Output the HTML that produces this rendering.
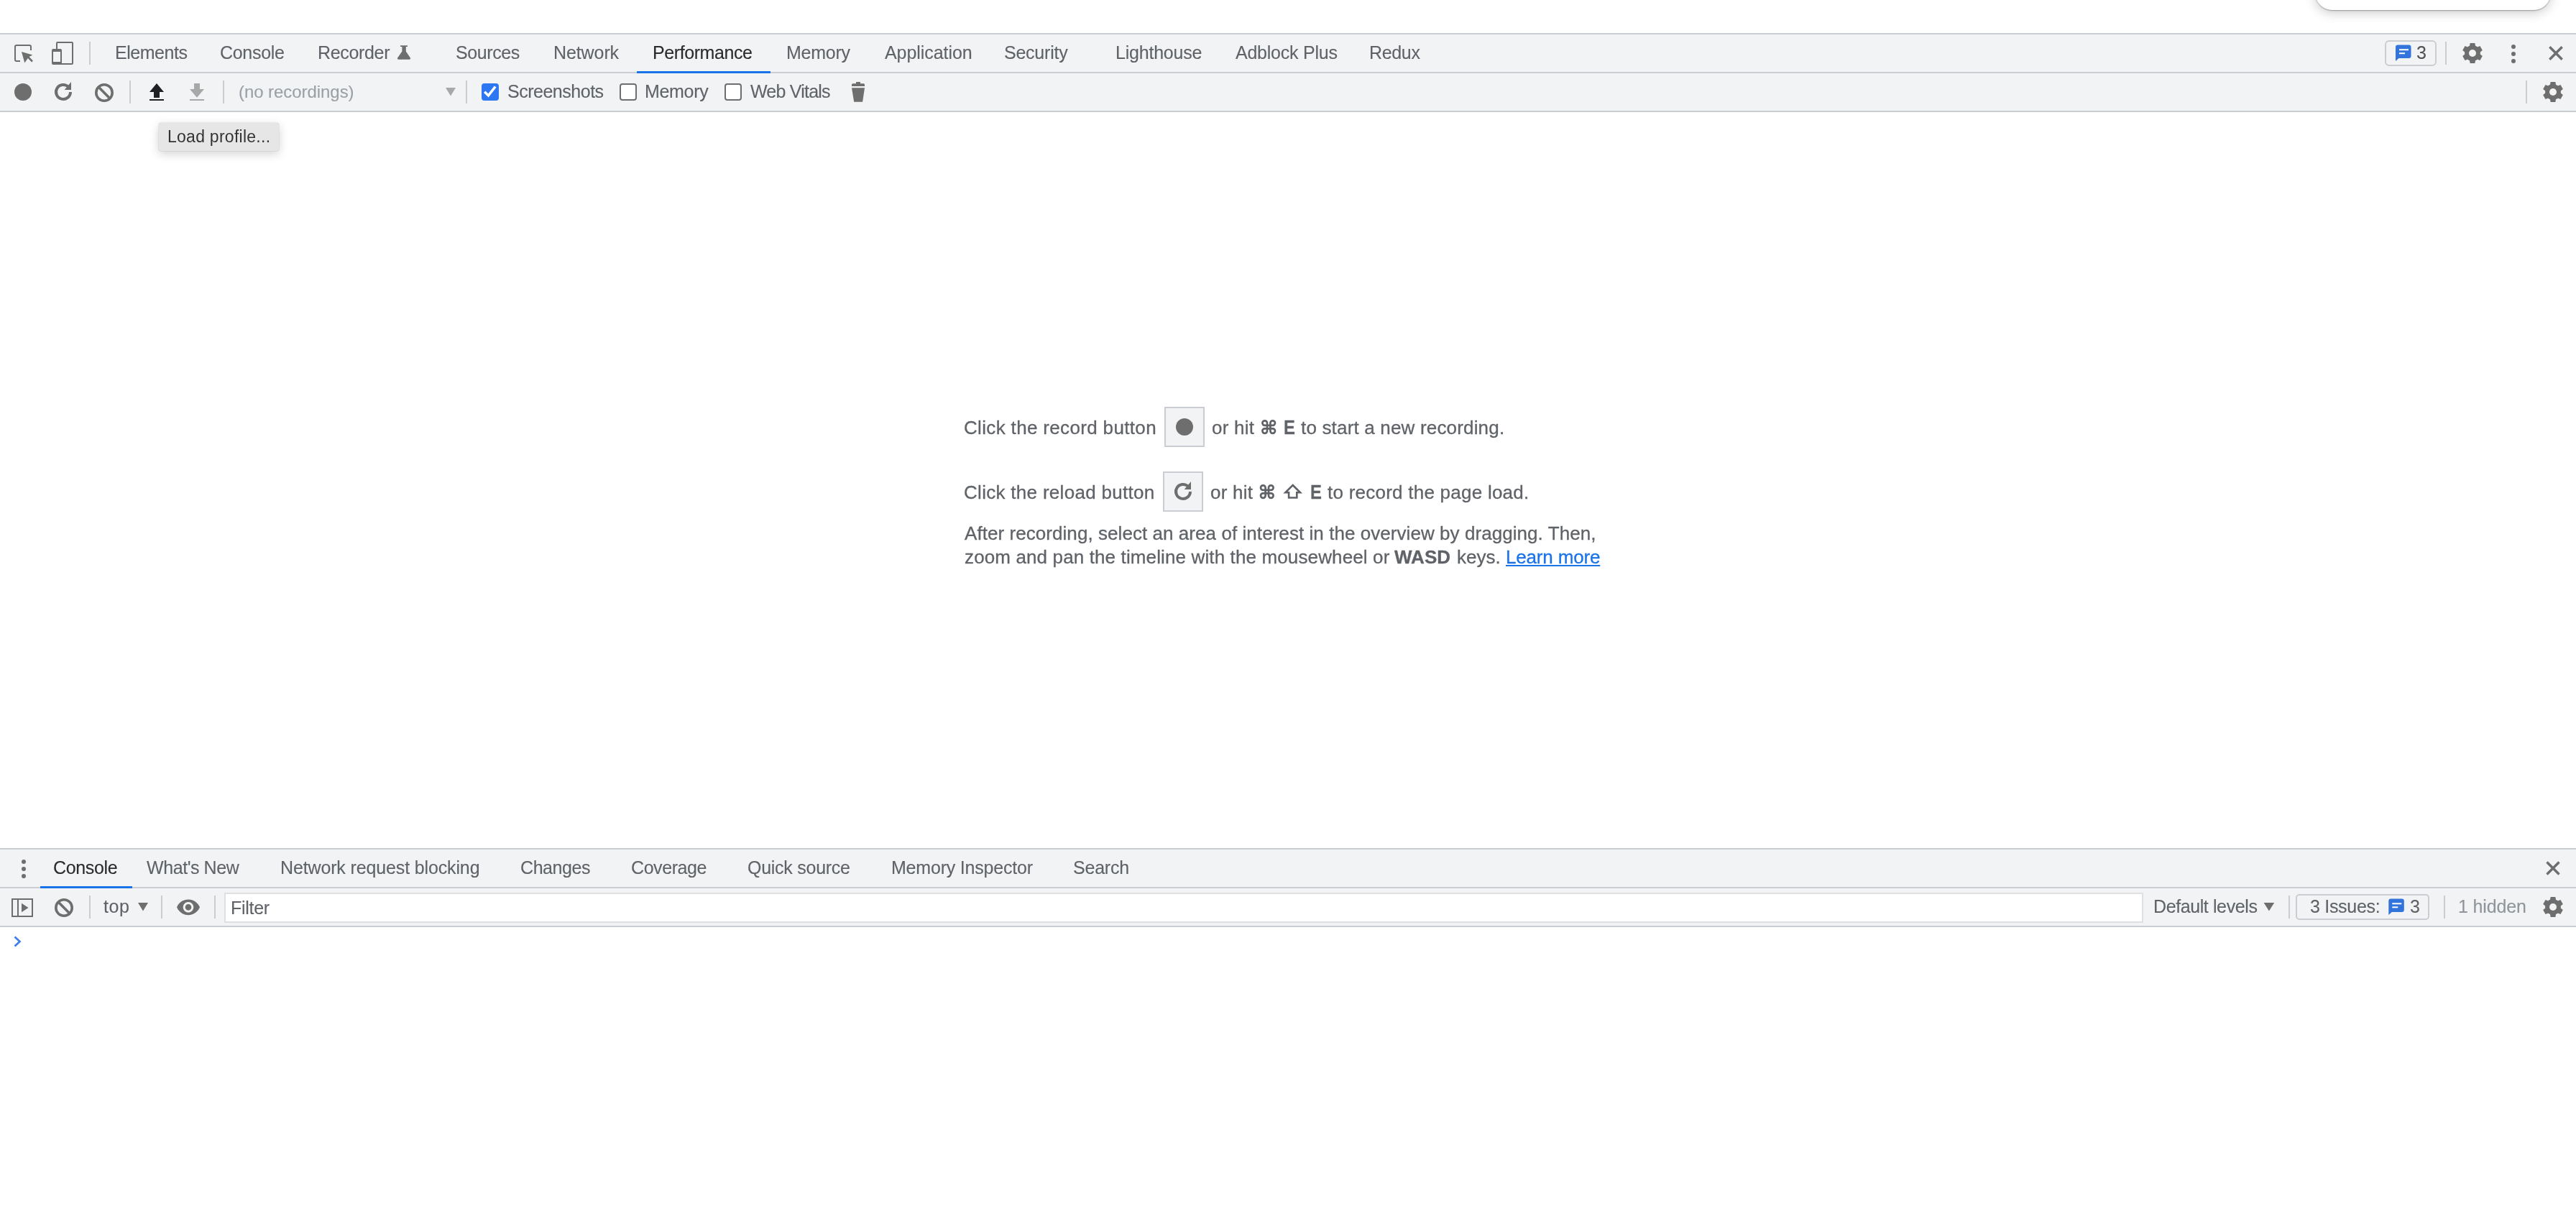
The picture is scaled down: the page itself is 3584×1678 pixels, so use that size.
<!DOCTYPE html>
<html><head><meta charset="utf-8"><style>
html,body{margin:0;padding:0;}
body{width:3584px;height:1678px;overflow:hidden;position:relative;background:#fff;font-family:"Liberation Sans",sans-serif;}
.t{position:absolute;white-space:pre;will-change:transform;-webkit-text-stroke:0.12px currentColor;}
.r{position:absolute;}
.s{position:absolute;overflow:visible;}
</style></head><body>
<div class="r" style="left:3221px;top:-40px;width:328px;height:54px;background:#fff;border-radius:0 0 24px 24px;box-shadow:0 4px 16px rgba(0,0,0,0.2),0 0.5px 1.5px rgba(0,0,0,0.3);"></div>
<div class="r" style="left:0px;top:46px;width:3584px;height:2px;background:#cacdd1;"></div>
<div class="r" style="left:0px;top:48px;width:3584px;height:52px;background:#f1f3f4;"></div>
<div class="r" style="left:0px;top:100px;width:3584px;height:2px;background:#cacdd1;"></div>
<div class="r" style="left:0px;top:102px;width:3584px;height:52px;background:#f1f3f4;"></div>
<div class="r" style="left:0px;top:154px;width:3584px;height:2px;background:#cacdd1;"></div>
<svg class="s" style="left:14px;top:54px;" width="40" height="40" viewBox="14 54 40 40"><path d="M28 85 H23 A2 2 0 0 1 21 83 V65 A2 2 0 0 1 23 63 H41 A2 2 0 0 1 43 65 V70" fill="none" stroke="#6e6e6e" stroke-width="2" stroke-linejoin="round"/><path d="M30 72 L45.4 76.4 L40.6 79.1 L45.9 84.6 L44.1 86.4 L38.8 81 L34.3 87.5 Z" fill="#6e6e6e"/></svg>
<svg class="s" style="left:66px;top:54px;" width="40" height="40" viewBox="66 54 40 40"><path d="M79 69 V60 A1 1 0 0 1 80 59 H100 A1 1 0 0 1 101 60 V88 A1 1 0 0 1 100 89 H85" fill="none" stroke="#6e6e6e" stroke-width="2"/><path d="M74 68 H84 A2 2 0 0 1 86 70 V90 H74 A2 2 0 0 1 72 88 V70 A2 2 0 0 1 74 68 Z M74 72 V86 H84 V72 Z" fill="#6e6e6e" fill-rule="evenodd"/></svg>
<div class="r" style="left:124px;top:58px;width:2px;height:32px;background:#cacdd1;"></div>
<svg class="s" style="left:14px;top:108px;" width="40" height="40" viewBox="14 108 40 40"><circle cx="32" cy="128" r="12" fill="#6e6e6e"/></svg>
<svg class="s" style="left:70px;top:106px;" width="40" height="40" viewBox="70 106 40 40"><path d="M98 128 A10 10 0 1 1 95.07 120.93" fill="none" stroke="#6e6e6e" stroke-width="4"/><path d="M89.7 125 L99 125 L99 114 Z" fill="#6e6e6e"/></svg>
<svg class="s" style="left:126px;top:110px;" width="40" height="40" viewBox="126 110 40 40"><circle cx="145" cy="129" r="11.2" fill="none" stroke="#6e6e6e" stroke-width="3.6"/><path d="M137.08 121.08 L152.92 136.92" stroke="#6e6e6e" stroke-width="3.6"/></svg>
<div class="r" style="left:180px;top:112px;width:2px;height:32px;background:#cacdd1;"></div>
<svg class="s" style="left:200px;top:110px;" width="40" height="40" viewBox="200 110 40 40"><path d="M218 116 L228 128 H222 V136 H214 V128 H208 Z M208 138 H228 V140 H208 Z" fill="#202124"/></svg>
<svg class="s" style="left:256px;top:110px;" width="40" height="40" viewBox="256 110 40 40"><path d="M270 116 H278 V124 H284 L274 135.8 L264 124 H270 Z M264 138 H284 V140 H264 Z" fill="#a8a8a8"/></svg>
<div class="r" style="left:310px;top:112px;width:2px;height:32px;background:#cacdd1;"></div>
<div class="t" id="t0" style="left:331.59px;top:116px;font-size:24px;line-height:24px;color:#9aa0a6;letter-spacing:-0.058px;">(no recordings)</div>
<svg class="s" style="left:614px;top:116px;" width="26" height="26" viewBox="614 116 26 26"><path d="M620 122 H634 L627 133.5 Z" fill="#a8a8a8"/></svg>
<div class="r" style="left:648px;top:112px;width:2px;height:32px;background:#cacdd1;"></div>
<div class="r" style="left:670px;top:116px;width:24px;height:24px;background:#2e77f3;border-radius:4px;"></div>
<svg class="s" style="left:670px;top:116px;" width="24" height="24" viewBox="670 116 24 24"><path d="M674.2 127.8 L679.5 132.9 L689.2 120.5" fill="none" stroke="#fff" stroke-width="3.5"/></svg>
<div class="t" id="t1" style="left:705.54px;top:115px;font-size:25px;line-height:25px;color:#5f6368;letter-spacing:-0.487px;">Screenshots</div>
<div class="r" style="left:862px;top:116px;width:24px;height:24px;background:#fff;box-sizing:border-box;border:2px solid #6e6e6e;border-radius:4px;"></div>
<div class="t" id="t2" style="left:896.96px;top:115px;font-size:25px;line-height:25px;color:#5f6368;letter-spacing:-0.327px;">Memory</div>
<div class="r" style="left:1008px;top:116px;width:24px;height:24px;background:#fff;box-sizing:border-box;border:2px solid #6e6e6e;border-radius:4px;"></div>
<div class="t" id="t3" style="left:1044.31px;top:115px;font-size:25px;line-height:25px;color:#5f6368;letter-spacing:-0.776px;">Web Vitals</div>
<svg class="s" style="left:1180px;top:110px;" width="30" height="36" viewBox="1180 110 30 36"><path d="M1191 114 H1197 V116.2 H1201.5 A1.5 1.5 0 0 1 1203 117.7 V120 H1185 V117.7 A1.5 1.5 0 0 1 1186.5 116.2 H1191 Z M1185 122.3 H1203 L1200.1 141.8 H1188.2 Z" fill="#6e6e6e"/></svg>
<div class="r" style="left:3318px;top:56px;width:72px;height:36px;background:transparent;box-sizing:border-box;border:2px solid #cacdd1;border-radius:6px;"></div>
<svg class="s" style="left:3330px;top:60px;" width="30" height="30" viewBox="3330 60 30 30"><g transform="translate(3333,62.5) scale(1.0)"><path d="M3 0 H18.5 A3 3 0 0 1 21.5 3 V15.5 A3 3 0 0 1 18.5 18.5 H4.4 L0 22.5 V3 A3 3 0 0 1 3 0 Z" fill="#3273dc"/><rect x="5" y="5.7" width="13" height="2" fill="#fff"/><rect x="5" y="10.7" width="8" height="2" fill="#fff"/></g></svg>
<div class="t" id="t4" style="left:3361.83px;top:61px;font-size:25px;line-height:25px;color:#505357;">3</div>
<div class="r" style="left:3402px;top:58px;width:2px;height:32px;background:#cacdd1;"></div>
<svg class="s" style="left:3420px;top:56px;" width="40" height="36" viewBox="3420 56 40 36"><circle cx="3440" cy="74" r="10.9" fill="#6e6e6e"/><path d="M3436.60 60 H3443.40 L3444.30 66 H3435.70 Z" fill="#6e6e6e" transform="rotate(0 3440 74)"/><path d="M3436.60 60 H3443.40 L3444.30 66 H3435.70 Z" fill="#6e6e6e" transform="rotate(60 3440 74)"/><path d="M3436.60 60 H3443.40 L3444.30 66 H3435.70 Z" fill="#6e6e6e" transform="rotate(120 3440 74)"/><path d="M3436.60 60 H3443.40 L3444.30 66 H3435.70 Z" fill="#6e6e6e" transform="rotate(180 3440 74)"/><path d="M3436.60 60 H3443.40 L3444.30 66 H3435.70 Z" fill="#6e6e6e" transform="rotate(240 3440 74)"/><path d="M3436.60 60 H3443.40 L3444.30 66 H3435.70 Z" fill="#6e6e6e" transform="rotate(300 3440 74)"/><circle cx="3440" cy="74" r="5.0" fill="#f1f3f4"/></svg>
<svg class="s" style="left:3488px;top:56px;" width="20" height="36" viewBox="3488 56 20 36"><circle cx="3497" cy="65" r="3" fill="#6e6e6e"/><circle cx="3497" cy="75" r="3" fill="#6e6e6e"/><circle cx="3497" cy="85" r="3" fill="#6e6e6e"/></svg>
<svg class="s" style="left:3540px;top:58px;" width="32" height="32" viewBox="3540 58 32 32"><path d="M3547.3 65.3 L3564.7 82.7 M3564.7 65.3 L3547.3 82.7" stroke="#6e6e6e" stroke-width="3.4"/></svg>
<div class="r" style="left:3514px;top:112px;width:2px;height:32px;background:#cacdd1;"></div>
<svg class="s" style="left:3530px;top:106px;" width="44" height="44" viewBox="3530 106 44 44"><circle cx="3552" cy="128" r="10.9" fill="#6e6e6e"/><path d="M3548.60 114 H3555.40 L3556.30 120 H3547.70 Z" fill="#6e6e6e" transform="rotate(0 3552 128)"/><path d="M3548.60 114 H3555.40 L3556.30 120 H3547.70 Z" fill="#6e6e6e" transform="rotate(60 3552 128)"/><path d="M3548.60 114 H3555.40 L3556.30 120 H3547.70 Z" fill="#6e6e6e" transform="rotate(120 3552 128)"/><path d="M3548.60 114 H3555.40 L3556.30 120 H3547.70 Z" fill="#6e6e6e" transform="rotate(180 3552 128)"/><path d="M3548.60 114 H3555.40 L3556.30 120 H3547.70 Z" fill="#6e6e6e" transform="rotate(240 3552 128)"/><path d="M3548.60 114 H3555.40 L3556.30 120 H3547.70 Z" fill="#6e6e6e" transform="rotate(300 3552 128)"/><circle cx="3552" cy="128" r="5.0" fill="#f1f3f4"/></svg>
<div class="t" id="t5" style="left:159.96px;top:61px;font-size:25px;line-height:25px;color:#5f6368;letter-spacing:-0.473px;">Elements</div>
<div class="t" id="t6" style="left:306.24px;top:61px;font-size:25px;line-height:25px;color:#5f6368;letter-spacing:-0.297px;">Console</div>
<div class="t" id="t7" style="left:441.67px;top:61px;font-size:25px;line-height:25px;color:#5f6368;letter-spacing:-0.336px;">Recorder</div>
<div class="t" id="t8" style="left:634.04px;top:61px;font-size:25px;line-height:25px;color:#5f6368;letter-spacing:-0.390px;">Sources</div>
<div class="t" id="t9" style="left:769.96px;top:61px;font-size:25px;line-height:25px;color:#5f6368;letter-spacing:-0.095px;">Network</div>
<div class="t" id="t10" style="left:907.97px;top:61px;font-size:25px;line-height:25px;color:#2a2b2e;letter-spacing:-0.409px;">Performance</div>
<div class="t" id="t11" style="left:1093.71px;top:61px;font-size:25px;line-height:25px;color:#5f6368;letter-spacing:-0.253px;">Memory</div>
<div class="t" id="t12" style="left:1230.82px;top:61px;font-size:25px;line-height:25px;color:#5f6368;letter-spacing:-0.067px;">Application</div>
<div class="t" id="t13" style="left:1397.33px;top:61px;font-size:25px;line-height:25px;color:#5f6368;letter-spacing:-0.236px;">Security</div>
<div class="t" id="t14" style="left:1551.96px;top:61px;font-size:25px;line-height:25px;color:#5f6368;letter-spacing:-0.211px;">Lighthouse</div>
<div class="t" id="t15" style="left:1719.12px;top:61px;font-size:25px;line-height:25px;color:#5f6368;letter-spacing:-0.237px;">Adblock Plus</div>
<div class="t" id="t16" style="left:1905.46px;top:61px;font-size:25px;line-height:25px;color:#5f6368;letter-spacing:-0.335px;">Redux</div>
<svg class="s" style="left:550px;top:60px;" width="26" height="26" viewBox="550 60 26 26"><path d="M557 63.3 H567 V65.1 H564.8 V71.6 L570.9 80.4 A1.6 1.6 0 0 1 569.6 82.7 H554.4 A1.6 1.6 0 0 1 553.1 80.4 L559.4 71.6 V65.1 H557 Z" fill="#6e6e6e"/></svg>
<div class="r" style="left:886px;top:99px;width:186px;height:3px;background:#1a73e8;"></div>
<div class="r" style="left:221px;top:171px;width:167px;height:39px;background:#e6e6e6;border-radius:3px;box-shadow:0 4px 14px rgba(0,0,0,0.18),0 0 1.5px rgba(0,0,0,0.25);"></div>
<div class="t" id="t17" style="left:233.43px;top:179px;font-size:23px;line-height:23px;color:#333333;letter-spacing:0.263px;-webkit-text-stroke:0;">Load profile...</div>
<div class="t" id="t18" style="left:1341.26px;top:582px;font-size:26px;line-height:26px;color:#5f6368;letter-spacing:0.340px;-webkit-text-stroke:0.3px currentColor;">Click the record button</div>
<div class="r" style="left:1620px;top:566px;width:56px;height:56px;background:#f1f3f4;box-sizing:border-box;border:2px solid #cacdd1;"></div>
<svg class="s" style="left:1630px;top:576px;" width="36" height="36" viewBox="1630 576 36 36"><circle cx="1648" cy="594" r="12" fill="#6e6e6e"/></svg>
<div class="t" id="t19" style="left:1686.31px;top:582px;font-size:26px;line-height:26px;color:#5f6368;letter-spacing:0.253px;-webkit-text-stroke:0.3px currentColor;">or hit</div>
<svg class="s" style="left:1750px;top:580px;" width="30" height="30" viewBox="1750 580 30 30"><g transform="translate(1755.2,584.1)"><path d="M7.8 4.5 A3.3 3.3 0 1 0 4.5 7.8 H15.5 A3.3 3.3 0 1 0 12.2 4.5 V15.5 A3.3 3.3 0 1 0 15.5 12.2 H4.5 A3.3 3.3 0 1 0 7.8 15.5 Z" fill="none" stroke="#5f6368" stroke-width="2.7"/></g></svg>
<div class="t" id="t20" style="left:1786.08px;top:582px;font-size:27px;line-height:27px;color:#5f6368;font-weight:bold;transform:scaleX(0.88);transform-origin:0 0;-webkit-text-stroke:0.3px currentColor;">E</div>
<div class="t" id="t21" style="left:1810.09px;top:582px;font-size:26px;line-height:26px;color:#5f6368;letter-spacing:0.175px;-webkit-text-stroke:0.3px currentColor;">to start a new recording.</div>
<div class="t" id="t22" style="left:1341.26px;top:672px;font-size:26px;line-height:26px;color:#5f6368;letter-spacing:0.296px;-webkit-text-stroke:0.3px currentColor;">Click the reload button</div>
<div class="r" style="left:1618px;top:656px;width:56px;height:56px;background:#f1f3f4;box-sizing:border-box;border:2px solid #cacdd1;"></div>
<svg class="s" style="left:1626px;top:662px;" width="40" height="40" viewBox="1626 662 40 40"><path d="M1656 684 A10 10 0 1 1 1653.07 676.93" fill="none" stroke="#6e6e6e" stroke-width="4"/><path d="M1647.7 681 L1657 681 L1657 670 Z" fill="#6e6e6e"/></svg>
<div class="t" id="t23" style="left:1683.91px;top:672px;font-size:26px;line-height:26px;color:#5f6368;letter-spacing:0.238px;-webkit-text-stroke:0.3px currentColor;">or hit</div>
<svg class="s" style="left:1748px;top:670px;" width="30" height="30" viewBox="1748 670 30 30"><g transform="translate(1752.8,674.1)"><path d="M7.8 4.5 A3.3 3.3 0 1 0 4.5 7.8 H15.5 A3.3 3.3 0 1 0 12.2 4.5 V15.5 A3.3 3.3 0 1 0 15.5 12.2 H4.5 A3.3 3.3 0 1 0 7.8 15.5 Z" fill="none" stroke="#5f6368" stroke-width="2.7"/></g></svg>
<svg class="s" style="left:1782px;top:670px;" width="34" height="28" viewBox="1782 670 34 28"><path d="M1798.7 675 L1809 685.3 H1804.3 V692.5 H1793.1 V685.3 H1788.4 Z" fill="none" stroke="#5f6368" stroke-width="2.6" stroke-linejoin="miter"/></svg>
<div class="t" id="t24" style="left:1822.97px;top:672px;font-size:27px;line-height:27px;color:#5f6368;font-weight:bold;transform:scaleX(0.88);transform-origin:0 0;-webkit-text-stroke:0.3px currentColor;">E</div>
<div class="t" id="t25" style="left:1846.80px;top:672px;font-size:26px;line-height:26px;color:#5f6368;letter-spacing:0.244px;-webkit-text-stroke:0.3px currentColor;">to record the page load.</div>
<div class="t" id="t26" style="left:1342.37px;top:729px;font-size:26px;line-height:26px;color:#5f6368;letter-spacing:0.059px;-webkit-text-stroke:0.3px currentColor;">After recording, select an area of interest in the overview by dragging. Then,</div>
<div class="t" id="t27" style="left:1341.60px;top:762px;font-size:26px;line-height:26px;color:#5f6368;letter-spacing:0.127px;-webkit-text-stroke:0.3px currentColor;">zoom and pan the timeline with the mousewheel or</div>
<div class="t" id="t28" style="left:1939.93px;top:762px;font-size:26px;line-height:26px;color:#5f6368;font-weight:bold;-webkit-text-stroke:0.3px currentColor;">WASD</div>
<div class="t" id="t29" style="left:2026.51px;top:762px;font-size:26px;line-height:26px;color:#5f6368;-webkit-text-stroke:0.3px currentColor;">keys.</div>
<div class="t" id="t30" style="left:2094.50px;top:762px;font-size:26px;line-height:26px;color:#1a73e8;letter-spacing:-0.171px;-webkit-text-stroke:0.3px currentColor;text-decoration:underline;">Learn more</div>
<div class="r" style="left:0px;top:1180px;width:3584px;height:2px;background:#cacdd1;"></div>
<div class="r" style="left:0px;top:1182px;width:3584px;height:52px;background:#f1f3f4;"></div>
<div class="r" style="left:0px;top:1234px;width:3584px;height:2px;background:#cacdd1;"></div>
<div class="r" style="left:0px;top:1236px;width:3584px;height:52px;background:#f1f3f4;"></div>
<div class="r" style="left:0px;top:1288px;width:3584px;height:2px;background:#cacdd1;"></div>
<svg class="s" style="left:24px;top:1192px;" width="16" height="34" viewBox="24 1192 16 34"><circle cx="33" cy="1199" r="3" fill="#6e6e6e"/><circle cx="33" cy="1209" r="3" fill="#6e6e6e"/><circle cx="33" cy="1219" r="3" fill="#6e6e6e"/></svg>
<div class="t" id="t31" style="left:74.32px;top:1195px;font-size:25px;line-height:25px;color:#2a2b2e;letter-spacing:-0.341px;">Console</div>
<div class="t" id="t32" style="left:203.56px;top:1195px;font-size:25px;line-height:25px;color:#5f6368;letter-spacing:-0.424px;">What's New</div>
<div class="t" id="t33" style="left:389.96px;top:1195px;font-size:25px;line-height:25px;color:#5f6368;letter-spacing:-0.137px;">Network request blocking</div>
<div class="t" id="t34" style="left:723.94px;top:1195px;font-size:25px;line-height:25px;color:#5f6368;letter-spacing:-0.424px;">Changes</div>
<div class="t" id="t35" style="left:877.94px;top:1195px;font-size:25px;line-height:25px;color:#5f6368;letter-spacing:-0.417px;">Coverage</div>
<div class="t" id="t36" style="left:1040.20px;top:1195px;font-size:25px;line-height:25px;color:#5f6368;letter-spacing:-0.266px;">Quick source</div>
<div class="t" id="t37" style="left:1239.57px;top:1195px;font-size:25px;line-height:25px;color:#5f6368;letter-spacing:-0.205px;">Memory Inspector</div>
<div class="t" id="t38" style="left:1493.43px;top:1195px;font-size:25px;line-height:25px;color:#5f6368;letter-spacing:-0.208px;">Search</div>
<div class="r" style="left:56px;top:1233px;width:128px;height:3px;background:#1a73e8;"></div>
<svg class="s" style="left:3540px;top:1196px;" width="26" height="26" viewBox="3540 1196 26 26"><path d="M3543.5 1199.5 L3560.5 1216.5 M3560.5 1199.5 L3543.5 1216.5" stroke="#6e6e6e" stroke-width="3.4"/></svg>
<svg class="s" style="left:12px;top:1246px;" width="40" height="36" viewBox="12 1246 40 36"><path d="M17 1251 H45 V1275 H17 Z M25 1251 V1275" fill="none" stroke="#6e6e6e" stroke-width="2"/><path d="M30 1256.7 L39.5 1263 L30 1269.2 Z" fill="#6e6e6e"/></svg>
<svg class="s" style="left:70px;top:1244px;" width="40" height="40" viewBox="70 1244 40 40"><circle cx="89" cy="1263" r="11.2" fill="none" stroke="#6e6e6e" stroke-width="3.6"/><path d="M81.08 1255.08 L96.92 1270.92" stroke="#6e6e6e" stroke-width="3.6"/></svg>
<div class="r" style="left:124px;top:1246px;width:2px;height:32px;background:#cacdd1;"></div>
<div class="t" id="t39" style="left:144.09px;top:1249px;font-size:25px;line-height:25px;color:#5f6368;letter-spacing:0.606px;">top</div>
<svg class="s" style="left:188px;top:1250px;" width="22" height="22" viewBox="188 1250 22 22"><path d="M192 1256 H206 L199 1267.5 Z" fill="#6e6e6e"/></svg>
<div class="r" style="left:224px;top:1246px;width:2px;height:32px;background:#cacdd1;"></div>
<svg class="s" style="left:242px;top:1246px;" width="40" height="34" viewBox="242 1246 40 34"><path transform="translate(244.55,1244.85) scale(1.4545)" d="M12 4.5C7 4.5 2.73 7.61 1 12c1.73 4.39 6 7.5 11 7.5s9.27-3.11 11-7.5c-1.730-4.39-6-7.5-11-7.5zM12 17c-2.76 0-5-2.24-5-5s2.24-5 5-5 5 2.24 5 5-2.240 5-5 5zm0-8c-1.66 0-3 1.34-3 3s1.34 3 3 3 3-1.34 3-3-1.34-3-3-3z" fill="#6e6e6e"/></svg>
<div class="r" style="left:298px;top:1246px;width:2px;height:32px;background:#cacdd1;"></div>
<div class="r" style="left:312px;top:1242px;width:2670px;height:42px;background:#fff;box-sizing:border-box;border:2px solid #e0e0e0;"></div>
<div class="t" id="t40" style="left:320.96px;top:1251px;font-size:25px;line-height:25px;color:#5f6368;letter-spacing:-0.298px;">Filter</div>
<div class="t" id="t41" style="left:2996.17px;top:1249px;font-size:25px;line-height:25px;color:#5f6368;letter-spacing:-0.399px;">Default levels</div>
<svg class="s" style="left:3146px;top:1250px;" width="22" height="22" viewBox="3146 1250 22 22"><path d="M3149.6 1256 H3164.2 L3156.9 1267.5 Z" fill="#6e6e6e"/></svg>
<div class="r" style="left:3184px;top:1246px;width:2px;height:32px;background:#cacdd1;"></div>
<div class="r" style="left:3194px;top:1244px;width:186px;height:36px;background:transparent;box-sizing:border-box;border:2px solid #cacdd1;border-radius:5px;"></div>
<div class="t" id="t42" style="left:3213.52px;top:1249px;font-size:25px;line-height:25px;color:#5f6368;letter-spacing:-0.299px;">3 Issues:</div>
<svg class="s" style="left:3320px;top:1246px;" width="30" height="30" viewBox="3320 1246 30 30"><g transform="translate(3323.3,1250.6) scale(1.0)"><path d="M3 0 H18.5 A3 3 0 0 1 21.5 3 V15.5 A3 3 0 0 1 18.5 18.5 H4.4 L0 22.5 V3 A3 3 0 0 1 3 0 Z" fill="#3273dc"/><rect x="5" y="5.7" width="13" height="2" fill="#fff"/><rect x="5" y="10.7" width="8" height="2" fill="#fff"/></g></svg>
<div class="t" id="t43" style="left:3352.92px;top:1249px;font-size:25px;line-height:25px;color:#5f6368;">3</div>
<div class="r" style="left:3400px;top:1246px;width:2px;height:32px;background:#cacdd1;"></div>
<div class="t" id="t44" style="left:3420.01px;top:1249px;font-size:25px;line-height:25px;color:#90959b;letter-spacing:-0.130px;">1 hidden</div>
<svg class="s" style="left:3530px;top:1240px;" width="44" height="44" viewBox="3530 1240 44 44"><circle cx="3552" cy="1262" r="10.9" fill="#6e6e6e"/><path d="M3548.60 1248 H3555.40 L3556.30 1254 H3547.70 Z" fill="#6e6e6e" transform="rotate(0 3552 1262)"/><path d="M3548.60 1248 H3555.40 L3556.30 1254 H3547.70 Z" fill="#6e6e6e" transform="rotate(60 3552 1262)"/><path d="M3548.60 1248 H3555.40 L3556.30 1254 H3547.70 Z" fill="#6e6e6e" transform="rotate(120 3552 1262)"/><path d="M3548.60 1248 H3555.40 L3556.30 1254 H3547.70 Z" fill="#6e6e6e" transform="rotate(180 3552 1262)"/><path d="M3548.60 1248 H3555.40 L3556.30 1254 H3547.70 Z" fill="#6e6e6e" transform="rotate(240 3552 1262)"/><path d="M3548.60 1248 H3555.40 L3556.30 1254 H3547.70 Z" fill="#6e6e6e" transform="rotate(300 3552 1262)"/><circle cx="3552" cy="1262" r="5.0" fill="#f1f3f4"/></svg>
<svg class="s" style="left:14px;top:1298px;" width="22" height="24" viewBox="14 1298 22 24"><path d="M20.5 1303.5 L27.5 1310 L20.5 1316.5" fill="none" stroke="#3d7ee9" stroke-width="2.7"/></svg>
</body></html>
